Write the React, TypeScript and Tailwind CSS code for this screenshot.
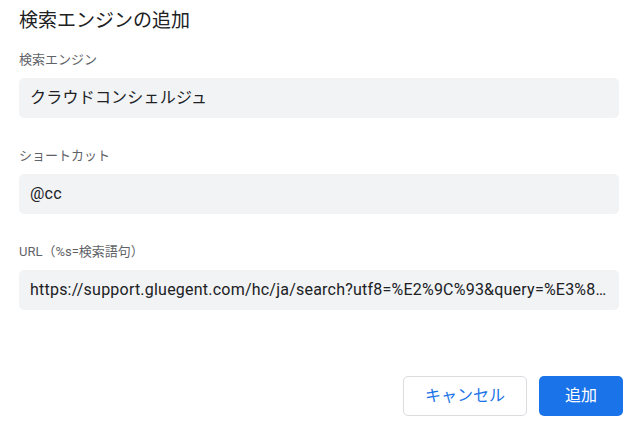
import React from 'react'

type FieldProps = {
  label: string
  value: string
}

const Field: React.FC<FieldProps> = ({ label, value }) => {
  return (
    <div className="flex flex-col">
      <label className="h-5 text-[13px] leading-5 text-[#5f6368] mb-2">{label}</label>
      <div className="h-10 w-[600px] rounded-[5px] bg-[#f1f3f4] pl-[11px] pr-[8px] flex items-center">
        <span className="truncate text-[16px] leading-5 tracking-[0.22px] text-[#202124]">{value}</span>
      </div>
    </div>
  )
}

const App: React.FC = () => {
  return (
    <div
      className="w-[640px] h-[436px] bg-white flex flex-col pl-[19px] pt-[9px]"
      style={{ fontFamily: 'Roboto, "Noto Sans CJK JP", sans-serif' }}
    >
      <h1 className="h-6 text-[19px] leading-6 text-[#202124] mb-[17px]">検索エンジンの追加</h1>

      <div className="flex flex-col gap-[28px]">
        <Field label="検索エンジン" value="クラウドコンシェルジュ" />
        <Field label="ショートカット" value="@cc" />
        <Field
          label="URL（%s=検索語句）"
          value="https://support.gluegent.com/hc/ja/search?utf8=%E2%9C%93&query=%E3%82%AF%E3%83%A9%E3%82%A6%E3%83%89"
        />
      </div>

      <div className="mt-[66px] flex justify-end gap-3 pr-[17px]">
        <button className="h-10 w-[124px] rounded-[5px] border border-[#dadce0] bg-white text-[16px] text-[#1a73e8]">
          キャンセル
        </button>
        <button className="h-10 w-[84px] rounded-[5px] bg-[#1a73e8] text-[16px] text-white">
          追加
        </button>
      </div>
    </div>
  )
}

export default App
